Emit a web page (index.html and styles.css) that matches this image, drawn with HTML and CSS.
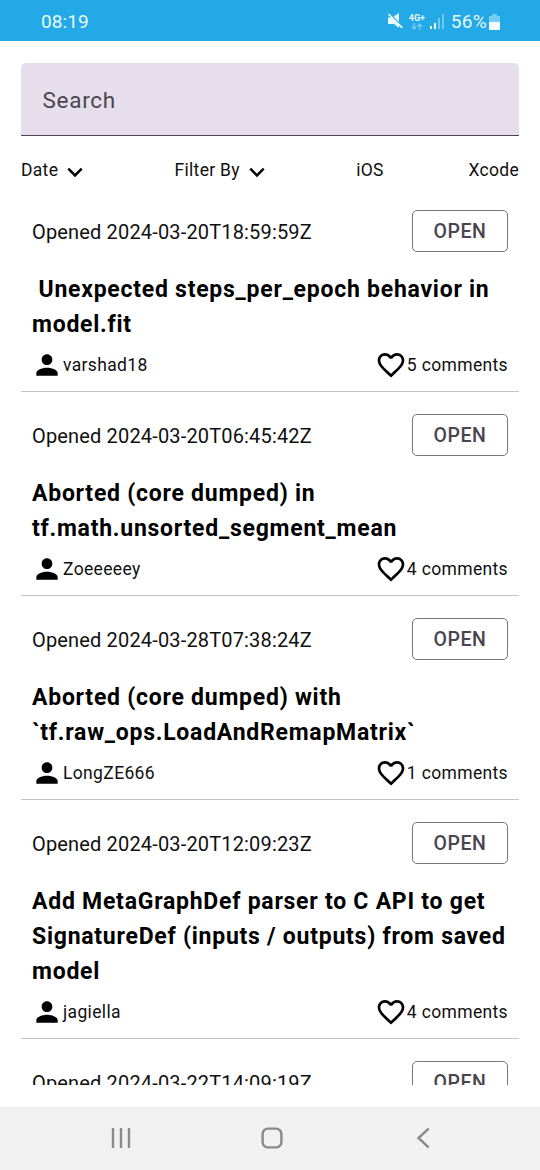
FILE: index.html
```html
<!DOCTYPE html>
<html lang="en">
<head>
<meta charset="utf-8">
<meta name="viewport" content="width=device-width">
<title>Issues</title>
<link rel="stylesheet" href="styles.css">
</head>
<body>
<svg class="defs" width="0" height="0">
  <symbol id="person" viewBox="0 0 24 24"><path d="M12 12c2.21 0 4-1.79 4-4s-1.79-4-4-4-4 1.79-4 4 1.79 4 4 4zm0 2c-2.67 0-8 1.34-8 4v2h16v-2c0-2.66-5.33-4-8-4z"/></symbol>
  <symbol id="heart" viewBox="0 0 24 24"><path d="M16.5 3c-1.74 0-3.41.81-4.5 2.09C10.91 3.81 9.24 3 7.5 3 4.42 3 2 5.42 2 8.5c0 3.78 3.4 6.86 8.55 11.54L12 21.35l1.45-1.32C18.6 15.36 22 12.28 22 8.5 22 5.42 19.58 3 16.5 3zm-4.4 15.55l-.1.1-.1-.1C7.14 14.24 4 11.39 4 8.5 4 6.5 5.5 5 7.5 5c1.54 0 3.04.99 3.57 2.36h1.87C13.46 5.99 14.96 5 16.5 5c2 0 3.5 1.5 3.5 3.5 0 2.89-3.14 5.74-7.9 10.05z"/></symbol>
  <symbol id="chevron" viewBox="0 0 16 11"><path d="M1.3 1.7 8 8.4l6.7-6.7" fill="none" stroke="#000" stroke-width="2.5"/></symbol>
</svg>
<div class="screen">
  <header class="status">
    <span class="time">08:19</span>
    <div class="indicators">
      <svg class="mute" viewBox="0 0 16 18" width="16" height="18"><path d="M1 6.5h3.5L12 14v3l-5-4H1zM6.5 5.5 12 2v9z" fill="#e8f8ff"/><path d="M1.5 3 15.3 16.8" stroke="#e8f8ff" stroke-width="1.7"/></svg>
      <div class="network"><span>4G+</span><svg viewBox="0 0 12 7" width="12" height="7"><path d="M3.2 0v5.5M1 3.5l2.2 2.4 2.2-2.4M8.8 7V1.5M6.6 3.5l2.2-2.4L11 3.5" fill="none" stroke="#76cdf4" stroke-width="1.4"/></svg></div>
      <svg class="signal" viewBox="0 0 14 15" width="14" height="15"><path d="M0 12h2v3H0zM4 9h2v6H4z" fill="#e8f8ff"/><path d="M8 4h2v11H8zM12 0h2v15h-2z" fill="#6fc9f2"/></svg>
      <span class="percent">56%</span>
      <svg class="battery" viewBox="0 0 11 16" width="11" height="16"><path d="M3 0h5v2h3v6H0V2h3z" fill="#76cdf4"/><path d="M0 8h11v7q0 1-1 1H1q-1 0-1-1z" fill="#f3fbff"/></svg>
    </div>
  </header>
  <main class="content">
    <div class="search">Search</div>
    <nav class="filters">
      <span class="filter">Date <svg class="chev"><use href="#chevron"/></svg></span>
      <span class="filter">Filter By <svg class="chev"><use href="#chevron"/></svg></span>
      <span class="filter">iOS</span>
      <span class="filter">Xcode</span>
    </nav>
    <section class="list">
      <article class="issue">
        <div class="top"><span class="opened">Opened 2024-03-20T18:59:59Z</span><button class="state">OPEN</button></div>
        <h2 class="title">&nbsp;Unexpected steps_per_epoch behavior in<br>model.fit</h2>
        <div class="meta"><svg class="person"><use href="#person"/></svg><span>varshad18</span><svg class="heart"><use href="#heart"/></svg><span>5 comments</span></div>
      </article>
      <article class="issue">
        <div class="top"><span class="opened">Opened 2024-03-20T06:45:42Z</span><button class="state">OPEN</button></div>
        <h2 class="title">Aborted (core dumped) in<br>tf.math.unsorted_segment_mean</h2>
        <div class="meta"><svg class="person"><use href="#person"/></svg><span>Zoeeeeey</span><svg class="heart"><use href="#heart"/></svg><span>4 comments</span></div>
      </article>
      <article class="issue">
        <div class="top"><span class="opened">Opened 2024-03-28T07:38:24Z</span><button class="state">OPEN</button></div>
        <h2 class="title">Aborted (core dumped) with<br>`tf.raw_ops.LoadAndRemapMatrix`</h2>
        <div class="meta"><svg class="person"><use href="#person"/></svg><span>LongZE666</span><svg class="heart"><use href="#heart"/></svg><span>1 comments</span></div>
      </article>
      <article class="issue">
        <div class="top"><span class="opened">Opened 2024-03-20T12:09:23Z</span><button class="state">OPEN</button></div>
        <h2 class="title">Add MetaGraphDef parser to C API to get<br>SignatureDef (inputs / outputs) from saved<br>model</h2>
        <div class="meta"><svg class="person"><use href="#person"/></svg><span>jagiella</span><svg class="heart"><use href="#heart"/></svg><span>4 comments</span></div>
      </article>
      <article class="issue">
        <div class="top"><span class="opened">Opened 2024-03-22T14:09:19Z</span><button class="state">OPEN</button></div>
      </article>
    </section>
  </main>
  <footer class="navbar">
    <svg viewBox="0 0 20 20" width="20" height="20"><path d="M2 1v18M10 1v18M18 1v18"/></svg>
    <svg viewBox="0 0 22 22" width="22" height="22"><rect x="1.6" y="1.6" width="18.8" height="18.8" rx="5.5"/></svg>
    <svg viewBox="0 0 20 20" width="20" height="20"><path d="M15 1.2 5.5 10l9.5 8.8"/></svg>
  </footer>
</div>
</body>
</html>
```
FILE: styles.css
```css
* { box-sizing: border-box; }
body { margin: 0; background: #fff; color: #101010; font-family: Roboto, sans-serif; }
.defs { display: block; position: absolute; }
.screen { width: 540px; height: 1170px; display: flex; flex-direction: column; overflow: hidden; }
.status { flex: none; height: 41px; background: #23a9e6; color: #e8f8ff; display: flex; justify-content: space-between; padding: 2px 40px 0; align-items: center; }
.time { font-size: 19px; letter-spacing: .1px; padding-left: 1px; }
.indicators { display: flex; align-items: center; }
.mute { margin-right: 6px; margin-top: -3px; }
.network { display: flex; flex-direction: column; align-items: center; width: 16px; font-size: 9px; font-weight: 700; line-height: 10px; margin-right: 5px; }
.signal { margin-right: 7px; }
.percent { font-size: 19px; letter-spacing: .3px; margin-right: 2px; }
.content { flex: 1; min-height: 0; padding: 22px 21px; display: flex; flex-direction: column; }
.search { flex: none; height: 73px; border-radius: 5px 5px 0 0; background: #e6dfeb; border-bottom: 1px solid #49454f; color: #49454f; font-size: 22.5px; letter-spacing: .7px; line-height: 75px; padding-left: 21.5px; }
.filters { flex: none; height: 52px; display: flex; justify-content: space-between; align-items: center; padding-top: 15px; font-size: 17.5px; letter-spacing: .3px; }
.filter { display: flex; align-items: center; white-space: pre; }
.chev { width: 16px; height: 11px; margin: 6px 7px 0 4px; }
.list { flex: 1; min-height: 0; overflow: hidden; }
.issue { border-bottom: 1px solid #c5c2c9; padding: 22px 11px 11px; }
.top { display: flex; justify-content: space-between; height: 42px; align-items: center; }
.opened { font-size: 20px; letter-spacing: .16px; padding-top: 1px; }
.state { width: 96px; height: 42px; border: 1px solid #77747c; border-radius: 5px; background: none; color: #49454f; font: 500 19.5px Roboto, sans-serif; letter-spacing: .6px; padding: 1px 0 0; }
.title { margin: 20px 0 7px; font-size: 23px; font-weight: 700; line-height: 35px; letter-spacing: .75px; white-space: nowrap; color: #000; }
.meta { display: flex; align-items: center; height: 31px; font-size: 17.5px; letter-spacing: .35px; }
.meta span { padding-top: 1px; }
.person { width: 32px; height: 32px; margin-left: -1px; }
.heart { width: 32px; height: 32px; margin-left: auto; }
.navbar { flex: none; height: 63px; background: #f1f1f1; display: grid; grid-template-columns: repeat(3, 151px); justify-content: center; align-items: center; justify-items: center; padding: 0 0 2px 3px; }
.navbar svg { fill: none; stroke: #8a8a8a; stroke-width: 2.4; stroke-linecap: round; }
```
